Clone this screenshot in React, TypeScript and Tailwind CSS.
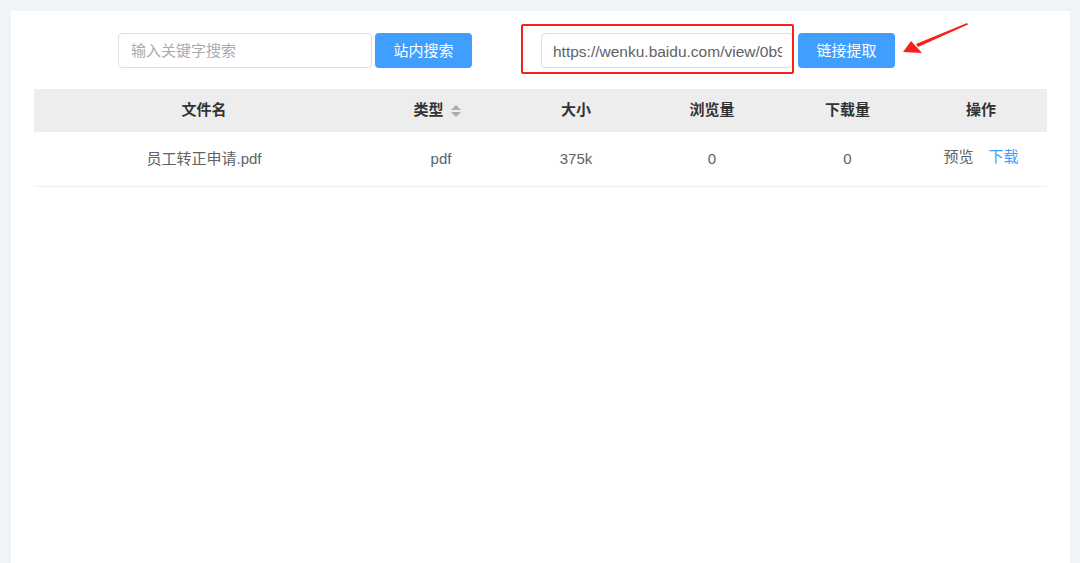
import React from "react";

const font = {
  fontFamily: '"Liberation Sans", "Noto Sans CJK SC", "Noto Sans", sans-serif',
};

const columns = [
  { label: "文件名", width: "w-[340px]" },
  { label: "类型", width: "w-[134px] pr-[8px]", sortable: true },
  { label: "大小", width: "w-[136px]" },
  { label: "浏览量", width: "w-[136px]" },
  { label: "下载量", width: "w-[135px]" },
  { label: "操作", width: "flex-1" },
];

const SortIcon = () => (
  <svg width="10" height="14" viewBox="0 0 10 14" className="ml-[7px]">
    <polygon points="5,1 10,6 0,6" fill="#a8abb2" />
    <polygon points="0,8 10,8 5,13" fill="#a8abb2" />
  </svg>
);

const Arrow = () => (
  <svg
    className="absolute left-[887px] top-[9px]"
    width="74"
    height="40"
    viewBox="0 0 74 40"
  >
    {/* tail thin, head thick */}
    <polygon points="69,3 70,4.5 20,27 18,24" fill="#f5221b" />
    <polygon points="5,32 13,21 24,33" fill="#f5221b" />
  </svg>
);

export default function App() {
  return (
    <div
      className="w-[1080px] h-[563px] bg-[#f0f3f7] pt-[11px] pl-[11px] pr-[10px] overflow-hidden"
      style={font}
    >
      <div className="relative w-full h-[560px] bg-white px-[23px] pt-[22px]">
        {/* search bars */}
        <div className="flex flex-row items-center h-[35px] pl-[84px]">
          <div className="w-[254px] h-[35px] border border-[#dcdfe6] rounded-[4px] flex items-center px-[12px] pt-[2px]">
            <span className="text-[15px] text-[#a8abb2]">输入关键字搜索</span>
          </div>
          <button className="ml-[3px] w-[97px] h-[35px] pt-[2px] rounded-[4px] bg-[#409eff] text-white text-[15px]">
            站内搜索
          </button>
          <div className="ml-[69px] w-[252px] h-[35px] border border-[#dcdfe6] rounded-[4px] flex items-center pl-[11px] pr-[10px] pt-[2px] overflow-hidden">
            <span className="text-[15.5px] text-[#606266] whitespace-nowrap overflow-hidden">
              https://wenku.baidu.com/view/0b9
            </span>
          </div>
          <button className="ml-[5px] w-[97px] h-[35px] pt-[2px] rounded-[4px] bg-[#409eff] text-white text-[15px]">
            链接提取
          </button>
        </div>

        {/* annotation */}
        <div className="absolute left-[510px] top-[13px] w-[273px] h-[50px] border-2 border-[#f5221b] rounded-[2px]" />
        <Arrow />

        {/* table */}
        <div className="mt-[21px] w-full">
          <div className="flex flex-row h-[43px] bg-[#ededee]">
            {columns.map((c) => (
              <div
                key={c.label}
                className={`${c.width} flex items-center justify-center text-[15px] font-bold text-[#333333]`}
              >
                {c.label}
                {c.sortable && <SortIcon />}
              </div>
            ))}
          </div>
          <div className="flex flex-row h-[55px] border-b border-[#ebeef5] text-[15px] text-[#606266]">
            <div className="w-[340px] flex items-center justify-center">员工转正申请.pdf</div>
            <div className="w-[134px] flex items-center justify-center">pdf</div>
            <div className="w-[136px] flex items-center justify-center">375k</div>
            <div className="w-[136px] flex items-center justify-center">0</div>
            <div className="w-[135px] flex items-center justify-center">0</div>
            <div className="flex-1 flex items-center justify-center gap-[15px] pb-[3px]">
              <span>预览</span>
              <span className="text-[#409eff]">下载</span>
            </div>
          </div>
        </div>
      </div>
    </div>
  );
}
